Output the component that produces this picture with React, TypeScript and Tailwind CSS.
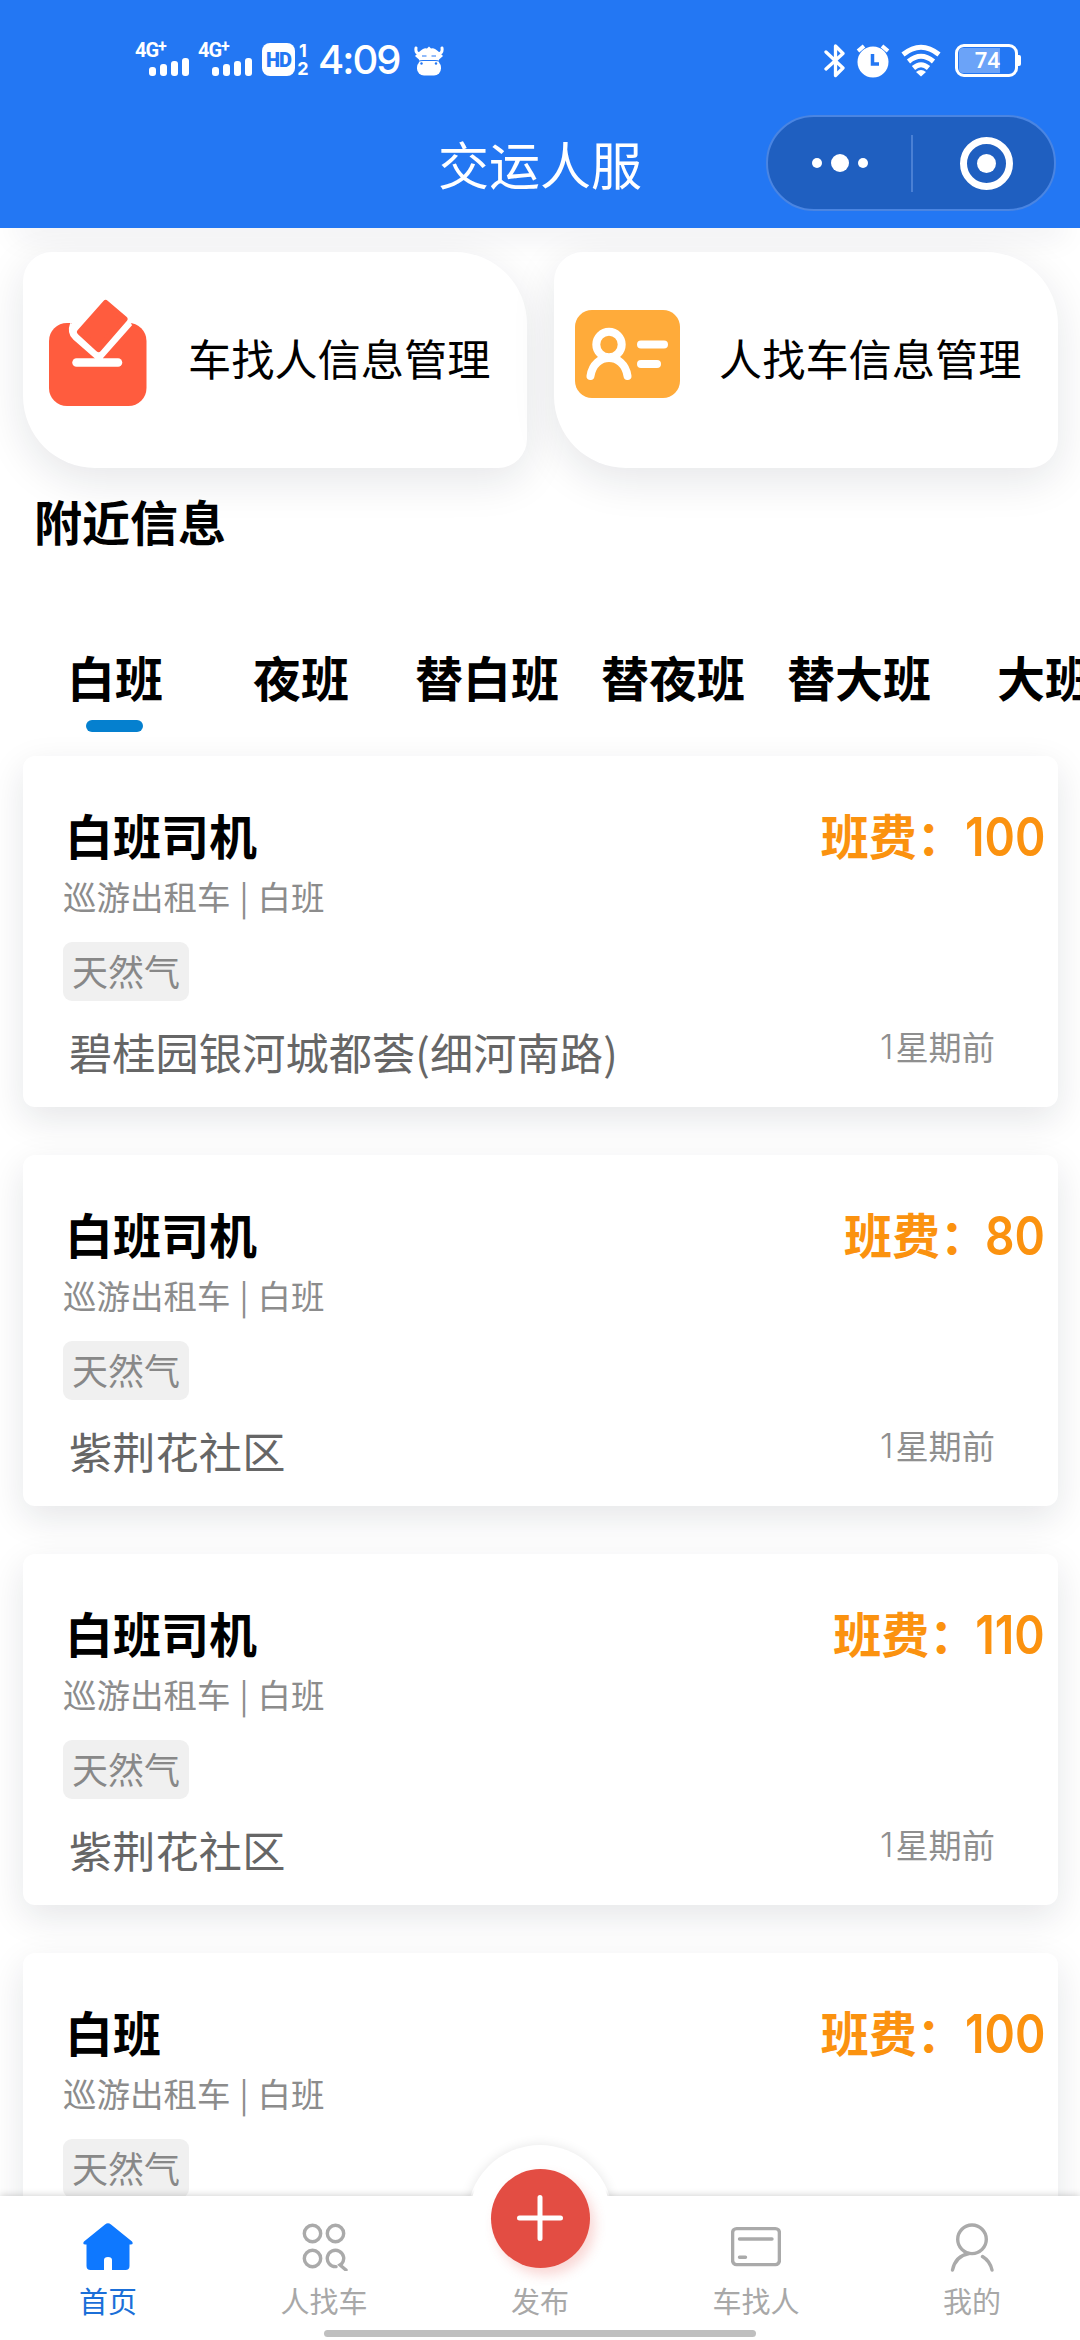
import React from "react";

const font = "font-['Noto_Sans_CJK_SC',sans-serif]";

function Signal() {
  return (
    <div className="flex h-[34px] w-[54px] flex-col">
      <span className="flex h-[16px] items-center font-['Roboto',sans-serif] text-[20px] font-bold leading-[16px] tracking-[-1px]">
        4G<span className="mb-[6px] text-[16px]">+</span>
      </span>
      <span className="ml-[14px] flex h-[18px] items-end gap-[4px]">
        <i className="h-[9px] w-[7px] rounded-[3px] bg-white" />
        <i className="h-[12px] w-[7px] rounded-[3px] bg-white" />
        <i className="h-[15px] w-[7px] rounded-[3px] bg-white" />
        <i className="h-[18px] w-[7px] rounded-[3px] bg-white" />
      </span>
    </div>
  );
}

function StatusBar() {
  return (
    <div className="flex h-[76px] items-start pt-[42px]">
      <div className="flex pl-[135px]">
        <div className="mr-[9px]"><Signal /></div>
        <Signal />
        <div className="ml-[10px] mt-[1px] flex h-[33px] w-[33px] items-center justify-center rounded-[8px] bg-white font-['Roboto',sans-serif] text-[20px] font-black leading-none tracking-[-1px] text-[#2377f3]">
          HD
        </div>
        <div className="ml-[2px] flex w-[12px] flex-col items-center font-['Inter',sans-serif] text-[18px] font-bold leading-[18px]">
          <span>1</span>
          <span>2</span>
        </div>
        <span className="ml-[9px] w-[84px] whitespace-nowrap font-['Inter',sans-serif] text-[40px] font-medium leading-[36px] tracking-[-2px]">4:09</span>
        <svg className="ml-[12px] mt-[3px]" width="30" height="31" viewBox="0 0 30 31" fill="white">
          <path d="M2 3 Q1 9 7 9 M28 3 Q29 9 23 9" fill="none" stroke="white" strokeWidth="3" strokeLinecap="round" />
          <path d="M5 7 Q10 2 13 3.500 L15 1.500 L17 3.500 Q20 2 25 7 L29 11 L24.500 15 H5.500 L1 11Z" />
          <rect x="3" y="15.500" width="24" height="15" rx="7" />
          <rect x="5" y="13" width="20" height="6" />
          <path d="M8 11 H12.500 M17.500 11 H22" stroke="#2377f3" strokeWidth="1" />
          <path d="M4 16.500 Q6 15.500 9 15.500 H21 Q24 15.500 26 16.500" fill="none" stroke="#2377f3" strokeWidth="1.200" />
          <circle cx="7.500" cy="18.500" r="1.200" fill="#2377f3" />
          <circle cx="22" cy="18.500" r="1.200" fill="#2377f3" />
        </svg>
      </div>
      <div className="ml-auto flex pr-[59px]">
        <svg className="mt-[2px]" width="22" height="34" viewBox="0 0 22 34" fill="none" stroke="white" strokeWidth="3.300" strokeLinejoin="round" strokeLinecap="round">
          <path d="M2 8 L19 24 L11.500 31.500 V2 L19 9.500 L2 25" />
        </svg>
        <svg className="ml-[10px] mt-[2px]" width="34" height="34" viewBox="0 0 34 34">
          <circle cx="17" cy="18" r="15.500" fill="white" />
          <path d="M2 7 L8 2 M26 2 L32 7" stroke="white" strokeWidth="4" />
          <path d="M16.500 10 V20 H23" fill="none" stroke="#2377f3" strokeWidth="3.500" />
        </svg>
        <svg className="ml-[11px] mt-[2px]" width="40" height="33" viewBox="0 0 40 33" fill="none" stroke="white" strokeWidth="5">
          <path d="M2 10.500 Q20 -4 38 10.500 M7.500 17.500 Q20 7 32.500 17.500 M12.500 24 Q20 17.500 27.500 24" />
          <path d="M15 28 Q20 24 25 28 L20 32.500Z" fill="white" stroke="none" />
        </svg>
        <div className="ml-[14px] mt-[1px] flex items-center">
          <div className="flex h-[33px] w-[63px] items-center rounded-[9px] border-[3px] border-white p-[1px]">
            <div className="flex h-full w-[41px] items-center justify-end rounded-l-[4px] bg-[#6ba3f8] font-['Noto_Sans',sans-serif] text-[22px] font-semibold leading-none">
              <span className="-mt-[3px]">74</span>
            </div>
          </div>
          <i className="h-[11px] w-[3px] rounded-r-[2px] bg-white" />
        </div>
      </div>
    </div>
  );
}

function Header() {
  return (
    <header className="relative z-10 h-[228px] shrink-0 bg-[#2377f3] text-white">
      <StatusBar />
      <div className="mt-[39px] grid h-[96px] grid-cols-[1fr_204px_1fr] items-center">
        <h1 className="col-start-2 whitespace-nowrap text-center text-[51px] leading-[95px]">交运人服</h1>
        <div className="mr-[24px] flex h-[96px] w-[290px] items-center justify-self-end rounded-full border-2 border-[#4a85e2] bg-[#1f5fc0]">
          <div className="flex w-[143px] items-center justify-center gap-[9px]">
            <i className="size-[10px] rounded-full bg-white" />
            <i className="size-[18px] rounded-full bg-white" />
            <i className="size-[10px] rounded-full bg-white" />
          </div>
          <i className="h-[57px] w-[2px] bg-[#4a80d4]" />
          <div className="flex flex-1 items-center justify-center pl-[5px]">
            <div className="flex size-[53px] items-center justify-center rounded-full border-[7px] border-white">
              <i className="size-[19px] rounded-full bg-white" />
            </div>
          </div>
        </div>
      </div>
    </header>
  );
}

function BallotIcon() {
  return (
    <svg className="mb-[16px] ml-[26px]" width="98" height="107" viewBox="0 0 98 107">
      <rect x="0" y="24" width="97.500" height="83" rx="18" fill="#ff5c3e" />
      <path d="M24 20 Q19 32 25 38 L50 61 L86 20Z" fill="white" />
      <path d="M24 25 Q21 33 26 38 L50 59 L81 24" fill="none" stroke="white" strokeWidth="6" />
      <path d="M46 59 H54" stroke="white" strokeWidth="9" />
      <path d="M27.500 63.500 H69" stroke="white" strokeWidth="8.500" strokeLinecap="round" />
      <path d="M56.700 4 L75.500 20 L49.500 50 L31 33Z" fill="#ff5c3e" stroke="#ff5c3e" strokeWidth="6" strokeLinejoin="round" />
    </svg>
  );
}

function IdCardIcon() {
  return (
    <svg className="mb-[12px] ml-[21px]" width="105" height="88" viewBox="0 0 105 88">
      <rect width="105" height="88" rx="17" fill="#ffab3a" />
      <g fill="none" stroke="white" strokeWidth="8" strokeLinecap="round">
        <circle cx="34" cy="34.500" r="12.700" />
        <path d="M15.500 66 C19 42 49 42 52.500 66" />
        <path d="M66 34.500 H89 M66 54 H82" />
      </g>
    </svg>
  );
}

function EntryCard({ icon, label }: { icon: React.ReactNode; label: string }) {
  return (
    <div className="flex h-[216px] w-[504px] items-center rounded-[29px_72px_29px_72px] bg-white shadow-[0_12px_44px_rgba(20,25,50,0.11)]">
      <div className="flex w-[165px] items-center">{icon}</div>
      <span className="mb-[6px] whitespace-nowrap text-[43.200px] leading-[60px] text-black">{label}</span>
    </div>
  );
}

const tabs = ["白班", "夜班", "替白班", "替夜班", "替大班", "大班"];

function Tabs() {
  return (
    <div className="flex h-[108px] pl-[22px]">
      {tabs.map((t, i) => (
        <div key={t} className="flex w-[186px] shrink-0 flex-col items-center">
          <span className="whitespace-nowrap text-[48px] font-bold leading-[56px] text-black">{t}</span>
          {i === 0 && <i className="mr-px mt-[16px] h-[12px] w-[57px] rounded-full bg-[#0580cf]" />}
        </div>
      ))}
    </div>
  );
}

type Job = { title: string; fee: string; place: string };

const jobs: Job[] = [
  { title: "白班司机", fee: "100", place: "碧桂园银河城都荟(细河南路)" },
  { title: "白班司机", fee: "80", place: "紫荆花社区" },
  { title: "白班司机", fee: "110", place: "紫荆花社区" },
  { title: "白班", fee: "100", place: "紫荆花社区" },
];

function JobCard({ title, fee, place }: Job) {
  return (
    <article className="h-[351px] shrink-0 rounded-[12px] bg-white pt-[48px] shadow-[0_12px_36px_rgba(20,25,50,0.11)]">
      <div className="flex h-[60px] items-center justify-between pl-[42px] pr-[13px]">
        <h3 className="text-[48px] font-bold leading-[60px] text-black">{title}</h3>
        <p className="flex items-center text-[48px] font-bold leading-[60px] text-[#fb920f]">
          班费：
          <span className="-ml-[12px] mt-[6px] origin-right scale-x-[0.87] font-['Inter',sans-serif] text-[53px] font-semibold">{fee}</span>
        </p>
      </div>
      <p className="mt-[9px] pl-[40px] text-[33.500px] leading-[46px] text-[#8c8c8c] [word-spacing:1.500px]">巡游出租车 | 白班</p>
      <span className="ml-[40px] mt-[23px] flex h-[59px] w-[126px] items-center justify-center rounded-[9px] bg-[#f0f0f0] pb-[3px] text-[36px] leading-[56px] text-[#888]">
        天然气
      </span>
      <div className="mt-[20px] flex h-[60px] items-center justify-between pl-[46px] pr-[63px]">
        <span className="text-[43.200px] leading-[60px] tracking-[0.100px] text-[#666]">{place}</span>
        <span className="mb-[10px] flex items-center text-[33.200px] leading-[48px] text-[#8f8f8f]">
          <span className="mr-[2px] mt-[2px] font-['Inter',sans-serif] text-[34px] font-light">1</span>星期前
        </span>
      </div>
    </article>
  );
}

function HomeIcon() {
  return (
    <svg width="50" height="48" viewBox="0 0 50 48" fill="#0e78ff">
      <path d="M22 1.500 Q25 -1 28 1.500 L49 18.500 Q51 21.500 47.500 21.500 H46.500 V43 Q46.500 47 42.500 47 H29 V37 Q29 34 25 34 Q21 34 21 37 V47 H7.500 Q3.500 47 3.500 43 V21.500 H2.500 Q-1 21.500 1 18.500Z" />
    </svg>
  );
}

function SearchGridIcon() {
  return (
    <svg width="50" height="48" viewBox="299 2223 50 48" fill="none" stroke="#aaaaaa" strokeWidth="3.400">
      <circle cx="312.500" cy="2233.500" r="8.200" />
      <circle cx="335.500" cy="2233.500" r="8.200" />
      <circle cx="312.500" cy="2258.500" r="8.200" />
      <path d="M336 2266.600 A8.200 8.200 0 1 1 341.500 2264 L340 2265 L346 2270" strokeLinecap="round" />
    </svg>
  );
}

function CardIcon() {
  return (
    <svg width="50" height="48" viewBox="731 2223 50 48" fill="none" stroke="#aaaaaa" strokeWidth="3.400" strokeLinecap="round">
      <rect x="732.600" y="2228.600" width="46.800" height="36" rx="4" />
      <path d="M739.500 2239 H772 M739.500 2257.300 H745.500" />
    </svg>
  );
}

function UserIcon() {
  return (
    <svg width="50" height="49" viewBox="947 2223 50 49" fill="none" stroke="#aaaaaa" strokeWidth="3.400" strokeLinecap="round">
      <circle cx="972" cy="2239.300" r="14.300" />
      <path d="M952.500 2270 Q955.500 2256 969 2253.500 M982.500 2256.500 Q990 2261 992 2270" />
    </svg>
  );
}

function NavItem({ icon, label, active }: { icon?: React.ReactNode; label: string; active?: boolean }) {
  return (
    <div className="flex flex-1 flex-col items-center pt-[27px]">
      <div className="h-[49px]">{icon}</div>
      <span className={`mt-[8px] text-[29px] leading-[40px] ${active ? "text-[#1b6fd8]" : "text-[#a8a8a8]"}`}>{label}</span>
    </div>
  );
}

function BottomNav() {
  return (
    <nav className="relative z-10 h-[144px] shrink-0">
      <div className="absolute left-[467px] top-[-51px] size-[146px] rounded-full bg-white shadow-[0_0_12px_rgba(0,0,0,0.1)]" />
      <div className="relative flex h-full bg-white shadow-[0_-1px_7px_rgba(0,0,0,0.17)]">
        <NavItem icon={<HomeIcon />} label="首页" active />
        <NavItem icon={<SearchGridIcon />} label="人找车" />
        <NavItem label="发布" />
        <NavItem icon={<CardIcon />} label="车找人" />
        <NavItem icon={<UserIcon />} label="我的" />
      </div>
      <div className="absolute left-[469px] top-[-49px] flex size-[142px] items-center justify-center rounded-full bg-white">
        <div className="flex size-[99px] items-center justify-center rounded-full bg-[#e34d43] shadow-[5px_7px_12px_rgba(227,77,67,0.22)]">
          <svg width="48" height="48" viewBox="0 0 48 48" stroke="white" strokeWidth="5" strokeLinecap="round">
            <path d="M24 3.500 V44.500 M3.500 24 H44.500" />
          </svg>
        </div>
      </div>
      <div className="absolute bottom-[3px] left-[324px] h-[7px] w-[432px] rounded-full bg-[#bfbfbf]" />
    </nav>
  );
}

export default function App() {
  return (
    <div className={`flex h-[2340px] w-[1080px] flex-col overflow-hidden bg-white ${font}`}>
      <Header />
      <main className="flex min-h-0 flex-1 flex-col overflow-hidden">
        <div className="mx-[23px] h-0 shrink-0 shadow-[0_0_30px_8px_rgba(20,25,50,0.09)]" />
        <section className="flex shrink-0 justify-between pl-[23px] pr-[22px] pt-[24px]">
          <EntryCard icon={<BallotIcon />} label="车找人信息管理" />
          <EntryCard icon={<IdCardIcon />} label="人找车信息管理" />
        </section>
        <h2 className="mt-[22px] shrink-0 pl-[34px] text-[48px] font-bold leading-[60px] text-black">附近信息</h2>
        <div className="mt-[98px] shrink-0">
          <Tabs />
        </div>
        <section className="flex flex-col gap-[48px] pl-[23px] pr-[22px]">
          {jobs.map((j, i) => (
            <JobCard key={i} {...j} />
          ))}
        </section>
      </main>
      <BottomNav />
    </div>
  );
}
